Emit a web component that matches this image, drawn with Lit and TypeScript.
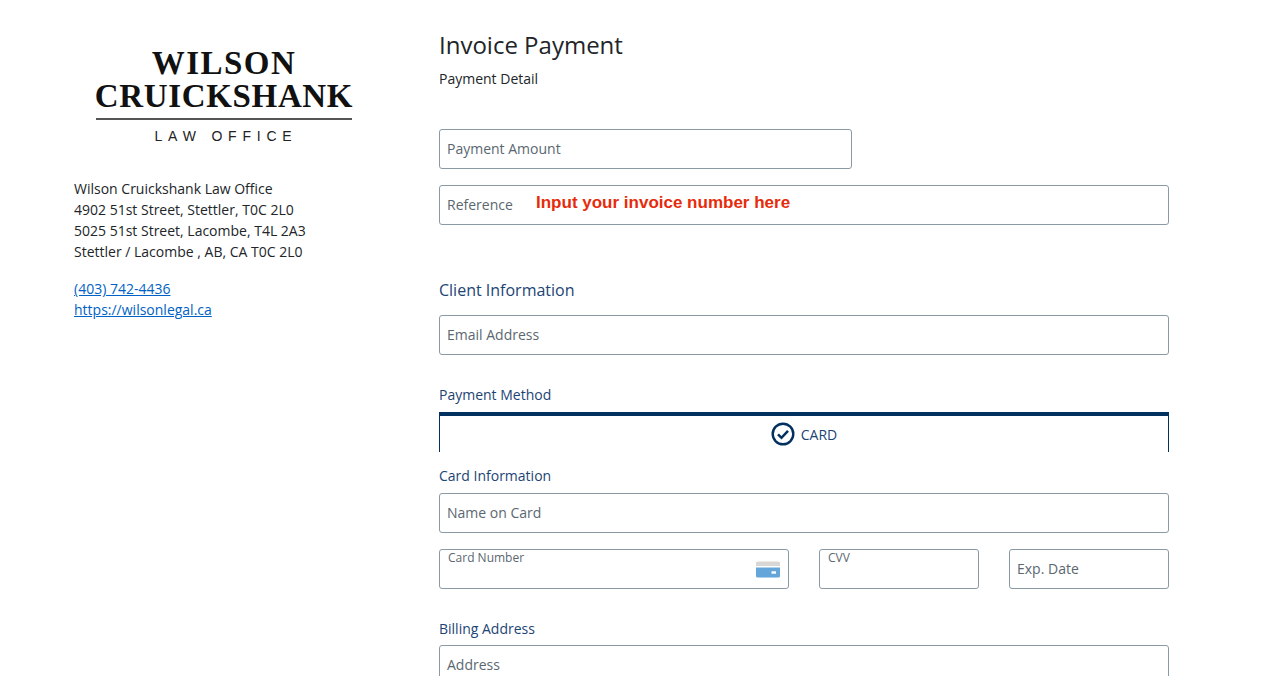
import { css, html, LitElement } from "lit";
import { customElement } from "lit/decorators.js";

@customElement("app-root")
export class AppRoot extends LitElement {
  static styles = css`
    :host {
      display: block;
      height: 676px;
      overflow: hidden;
      background: #fff;
      font-family: "Open Sans", "Liberation Sans", sans-serif;
      color: #212529;
    }

    .page {
      display: grid;
      grid-template-columns: 292px 730px;
      column-gap: 73px;
      padding-left: 74px;
    }

    /* left column */
    .logo {
      width: 256px;
      margin: 47px 0 0 22px;
      display: flex;
      flex-direction: column;
      align-items: center;
      color: #111;
      font-family: "Liberation Serif", serif;
      font-weight: 700;
    }
    .logo-line {
      font-size: 33px;
      line-height: 33px;
      letter-spacing: 1.5px;
      white-space: nowrap;
    }
    .logo-line.second {
      letter-spacing: 0.65px;
    }
    .logo-rule {
      width: 100%;
      height: 2px;
      background: #555;
      margin: 5px 0 8px;
    }
    .logo-sub {
      font-family: "Liberation Sans", sans-serif;
      font-weight: 400;
      font-size: 14px;
      line-height: 16px;
      letter-spacing: 5.8px;
      margin-left: 4px;
      color: #222;
      white-space: nowrap;
    }

    .address {
      margin-top: 34px;
      font-size: 14px;
      line-height: 21px;
    }
    .contact {
      margin-top: 16px;
      font-size: 14px;
      line-height: 21px;
    }
    .contact a {
      display: block;
      width: fit-content;
      color: #0062c4;
      text-decoration: underline;
    }

    /* right column */
    h1 {
      margin: 28px 0 0;
      font-size: 24px;
      line-height: 33px;
      font-weight: 400;
    }
    .detail {
      margin-top: 8px;
      font-size: 14px;
      line-height: 19px;
    }

    .field {
      position: relative;
      box-sizing: border-box;
      height: 40px;
      border: 1px solid #8a9aa5;
      border-radius: 3px;
      padding: 0 7px 2px;
      display: flex;
      align-items: center;
      font-size: 14px;
      color: #5b6770;
      background: #fff;
    }
    .field.small {
      align-items: flex-start;
      font-size: 12px;
      line-height: 16px;
      padding: 0 8px;
    }
    .amount {
      width: 413px;
      margin-top: 41px;
    }
    .reference {
      margin-top: 16px;
    }
    .hint {
      position: absolute;
      left: 96px;
      top: 7px;
      font-family: "Liberation Sans", sans-serif;
      font-weight: 700;
      font-size: 17px;
      line-height: 20px;
      color: #e62b0c;
    }

    .heading {
      color: #1c4474;
      font-size: 14px;
      line-height: 19px;
      margin-bottom: 8px;
    }
    .heading.client {
      font-size: 16px;
      line-height: 22px;
      margin: 54px 0 14px;
    }
    .heading.method {
      margin: 30px 0 8px;
    }
    .heading.card {
      margin: 14px 0 8px;
    }
    .heading.billing {
      margin: 30px 0 7px;
    }

    .tab {
      box-sizing: border-box;
      height: 40px;
      border: 1px solid #03315f;
      border-top: 4px solid #03315f;
      border-bottom: none;
      display: flex;
      align-items: center;
      justify-content: center;
      gap: 6px;
      font-size: 14px;
      color: #1c4474;
    }
    .tab svg {
      display: block;
    }

    .row {
      display: grid;
      grid-template-columns: 350px 160px 160px;
      column-gap: 30px;
      margin-top: 16px;
    }
    .card-icon {
      position: absolute;
      right: 8px;
      top: 11px;
    }
  `;

  render() {
    return html`
      <div class="page">
        <aside>
          <div class="logo">
            <div class="logo-line">WILSON</div>
            <div class="logo-line second">CRUICKSHANK</div>
            <div class="logo-rule"></div>
            <div class="logo-sub">LAW OFFICE</div>
          </div>
          <div class="address">
            <div>Wilson Cruickshank Law Office</div>
            <div>4902 51st Street, Stettler, T0C 2L0</div>
            <div>5025 51st Street, Lacombe, T4L 2A3</div>
            <div>Stettler / Lacombe , AB, CA T0C 2L0</div>
          </div>
          <div class="contact">
            <a href="#">(403) 742-4436</a>
            <a href="#">https://wilsonlegal.ca</a>
          </div>
        </aside>

        <main>
          <h1>Invoice Payment</h1>
          <div class="detail">Payment Detail</div>

          <div class="field amount">Payment Amount</div>
          <div class="field reference">
            Reference
            <span class="hint">Input your invoice number here</span>
          </div>

          <div class="heading client">Client Information</div>
          <div class="field">Email Address</div>

          <div class="heading method">Payment Method</div>
          <div class="tab">
            <svg width="24" height="24" viewBox="0 0 24 24" fill="none" stroke="#03315f">
              <circle cx="12" cy="12" r="10.300" stroke-width="2.400"></circle>
              <path d="M7 12.300l3.500 3.500 6.500-7" stroke-width="2.500"></path>
            </svg>
            CARD
          </div>

          <div class="heading card">Card Information</div>
          <div class="field">Name on Card</div>

          <div class="row">
            <div class="field small">
              Card Number
              <svg class="card-icon" width="24" height="17" viewBox="0 0 24 17">
                <path d="M0 2a1.500 1.500 0 0 1 1.500-1.500h21A1.500 1.500 0 0 1 24 2v3H0z" fill="#d9d6d6"></path>
                <path d="M0 6.500h24V15a1.500 1.500 0 0 1-1.500 1.500h-21A1.500 1.500 0 0 1 0 15z" fill="#64a5da"></path>
                <rect x="15.500" y="10.300" width="4.500" height="2.400" fill="#fff"></rect>
              </svg>
            </div>
            <div class="field small">CVV</div>
            <div class="field">Exp. Date</div>
          </div>

          <div class="heading billing">Billing Address</div>
          <div class="field">Address</div>
        </main>
      </div>
    `;
  }
}
